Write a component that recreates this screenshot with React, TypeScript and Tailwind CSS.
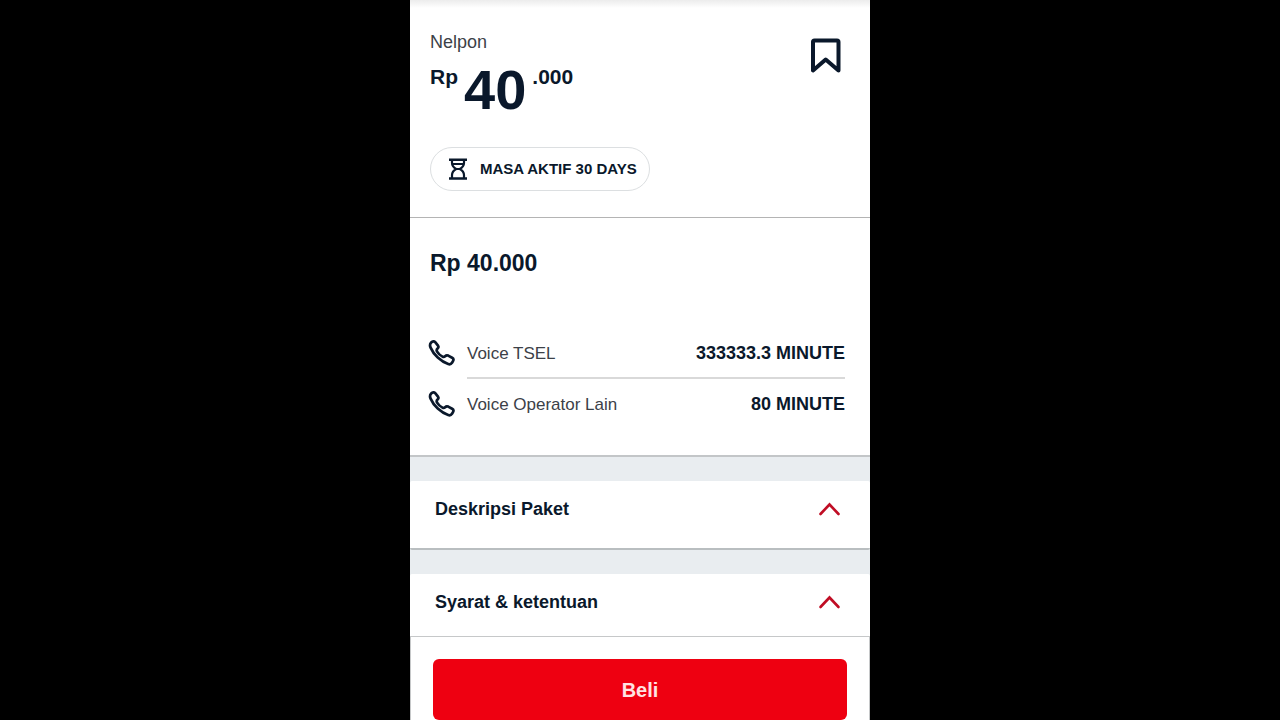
const HourglassIcon = () => (
    <svg
        className="h-6 w-5 shrink-0"
        viewBox="0 0 20 24"
        fill="none"
        stroke="currentColor"
        strokeWidth="2.2"
        aria-hidden="true"
    >
        <path d="M1 2.700h18M1 21.500h18" strokeWidth="2.400" />
        <path d="M4 2.700v3.300c0 3 1.800 4.600 4.200 6C5.800 13.400 4 15.300 4 18v3.500M16 2.700v3.300c0 3-1.800 4.600-4.200 6 2.400 1.400 4.200 3.300 4.200 6v3.500" />
        <path d="M4.500 7h11M8 12h4" />
    </svg>
);

const PhoneIcon = () => (
    <svg
        className="h-7 w-7 shrink-0"
        viewBox="0 0 28 28"
        fill="none"
        stroke="currentColor"
        strokeWidth="2.7"
        strokeLinejoin="round"
        aria-hidden="true"
    >
        <path d="M3.200 2.500C4.500 1.200 6.200 1.100 7.200 2.200L10 5.700C10.800 6.900 10.500 7.800 9.500 8.600C8.500 9.500 8.400 10.400 9.100 11.600C10.400 13.800 12.300 15.500 14.500 16.600C15.600 17.200 16.300 17 17.100 16.200C18 15.300 19.100 15.100 20.200 15.600L24.100 17.700C25.600 18.600 25.800 19.700 25 21.100L24 22.800C23.100 24.200 21.800 24.600 20.200 24C12.700 21.400 5.700 14.900 2.600 7.600C1.700 5.600 1.800 3.900 3.200 2.500Z" />
    </svg>
);

const ChevronUp = () => (
    <svg
        className="h-6 w-6"
        viewBox="0 0 24 24"
        fill="none"
        stroke="#c00d24"
        strokeWidth="2.6"
        strokeLinecap="round"
        aria-hidden="true"
    >
        <path d="m3.500 19 9-9.500 9 9.500" />
    </svg>
);

const quotas = [
    { name: 'Voice TSEL', amount: '333333.3 MINUTE' },
    { name: 'Voice Operator Lain', amount: '80 MINUTE' },
];

const sections = ['Deskripsi Paket', 'Syarat & ketentuan'];

const App = () => {
    return (
        <div className="h-screen overflow-hidden bg-black font-['Liberation_Sans',Arial,sans-serif] text-[#0a182b]">
            <main className="mx-auto flex h-full w-full max-w-[460px] flex-col bg-[#e9edf0]">
                <div className="min-h-0 flex-1 overflow-hidden">
                    <header className="border-b border-[#b4b4b4] bg-white">
                        <div className="h-2 bg-linear-to-b from-[#ececec] to-white" />
                        <div className="flex items-start justify-between pt-6 pr-6 pl-5">
                            <div>
                                <p className="text-[18px] leading-5 text-[#3c4148]">
                                    Nelpon
                                </p>
                                <p className="mt-3 flex items-start gap-[6px] text-[21px] leading-[26px] font-bold">
                                    <span>Rp</span>
                                    <span className="text-[56px] leading-[52px]">
                                        40
                                    </span>
                                    <span>.000</span>
                                </p>
                            </div>
                            <button
                                type="button"
                                aria-label="Simpan paket"
                                className="mt-1"
                            >
                                <svg
                                    className="h-10 w-10"
                                    viewBox="0 0 40 40"
                                    fill="none"
                                    stroke="currentColor"
                                    strokeWidth="4"
                                    strokeLinejoin="round"
                                >
                                    <path d="M8.500 4.500h22.500q1.500 0 1.500 1.500v28.500L19.700 23.500 7 34.500V6q0-1.500 1.500-1.500Z" />
                                </svg>
                            </button>
                        </div>
                        <div className="mt-[31px] mb-[26px] ml-5 flex h-11 w-fit items-center gap-3 rounded-full border border-[#dcdfe1] px-3 pl-[17px]">
                            <HourglassIcon />
                            <span className="text-[15px] font-bold">
                                MASA AKTIF 30 DAYS
                            </span>
                        </div>
                    </header>

                    <section className="border-b-2 border-[#c3c6c8] bg-white pt-[31px] pr-[25px] pb-[25px] pl-[18px]">
                        <h1 className="pl-[2px] text-[23px] leading-7 font-bold">
                            Rp 40.000
                        </h1>
                        <ul className="mt-[51px]">
                            {quotas.map((quota) => (
                                <li
                                    key={quota.name}
                                    className="group flex items-center gap-[11px]"
                                >
                                    <PhoneIcon />
                                    <div className="flex h-[51px] flex-1 items-center justify-between border-b-2 border-[#d9d9d9] pt-[2px] group-last:border-transparent">
                                        <span className="text-[17px] text-[#3c4148]">
                                            {quota.name}
                                        </span>
                                        <span className="text-[18px] font-bold">
                                            {quota.amount}
                                        </span>
                                    </div>
                                </li>
                            ))}
                        </ul>
                    </section>

                    {sections.map((title) => (
                        <section
                            key={title}
                            className="mt-6 rounded-xs border-b-2 border-[#b9bec0] bg-white"
                        >
                            <button
                                type="button"
                                className="flex w-full items-start justify-between pt-[14px] pr-[29px] pb-[25px] pl-[25px] text-left text-[18px] leading-7 font-bold"
                            >
                                {title}
                                <ChevronUp />
                            </button>
                        </section>
                    ))}
                </div>

                <footer className="border border-b-0 border-[#c6c8c9] bg-white px-[22px] pt-[22px]">
                    <button
                        type="button"
                        className="h-[61px] w-full rounded-md bg-[#ee0011] text-[20px] font-bold text-[#ffe3e3]"
                    >
                        Beli
                    </button>
                </footer>
            </main>
        </div>
    );
};

export default App;
